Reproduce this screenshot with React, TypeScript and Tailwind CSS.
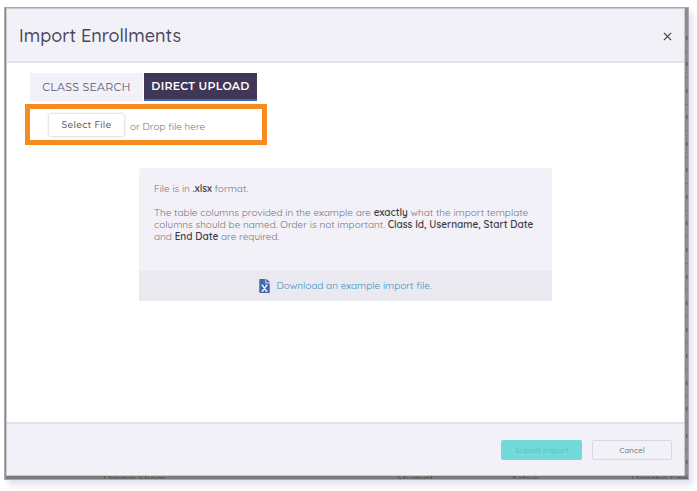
import { useState } from 'react'
import type { ReactNode } from 'react'

function FileExcelIcon() {
  return (
    <svg viewBox="0 0 384 512" className="h-[14px] w-[11px] shrink-0" aria-hidden="true">
      <path
        fill="#4268b0"
        d="M224 136V0H24C11 0 0 11 0 24v464c0 13 11 24 24 24h336c13 0 24-11 24-24V160H248c-13 0-24-11-24-24zM384 122v6H256V0h6c6 0 12 3 17 7l98 98c4 5 7 11 7 17z"
      />
      <path fill="none" stroke="#fff" strokeWidth="46" d="M112 232l160 210M272 232L112 442M84 236h70M230 236h70M84 440h70M230 440h70" />
    </svg>
  )
}

function CloseIcon() {
  return (
    <svg viewBox="0 0 10 10" className="size-[9px]" fill="none" stroke="#444" strokeWidth="1.4" aria-hidden="true">
      <path d="M1 1l8 8M9 1L1 9" />
    </svg>
  )
}

function Strong({ children }: { children: ReactNode }) {
  return <strong className="font-semibold text-[#3d3b44]">{children}</strong>
}

// The sliver of the dimmed page that shows below the dialog
function PageBehind() {
  return (
    <div className="flex h-[3px] overflow-hidden bg-[#7b7b7b] text-[10px] leading-[6px] text-[#45454c]" aria-hidden="true">
      <span className="w-1/7 shrink-0" />
      <span className="w-[44%]">Dimpin Shear</span>
      <span className="w-[17%]">Student</span>
      <span className="w-[18%]">Active</span>
      <span className="whitespace-nowrap">Doncho Cen</span>
    </div>
  )
}

// Edges of the table rows that show to the right of the dialog
function RowEdges() {
  return (
    <div className="flex w-[3px] flex-col overflow-hidden pt-[17px]" aria-hidden="true">
      {Array.from({ length: 17 }, (_, i) => (
        <div key={i} className="flex flex-1 items-center justify-end border-b border-[#7b7b7b]">
          <span className="h-1 w-[2px] rounded-l-xs border-l border-[#3c4468]" />
        </div>
      ))}
    </div>
  )
}

const tabs = [
  { id: 'search', label: 'CLASS SEARCH' },
  { id: 'upload', label: 'DIRECT UPLOAD' },
] as const

export default function App() {
  const [tab, setTab] = useState<'search' | 'upload'>('upload')

  return (
    <div className="flex min-h-screen flex-col bg-white pt-[7px] pr-2 pb-[11px] pl-1 font-['Quicksand','Lato',sans-serif] text-[#77757e]">
      <div className="flex flex-1 flex-col border border-[#a9a9a9] bg-[#8d8d8d] pl-px shadow-[4px_5px_6px_#e4e2f0]">
        <div className="flex flex-1">
          <section role="dialog" aria-labelledby="title" className="flex flex-1 flex-col border border-[#c9c9cc] bg-white">
            <header className="flex items-center justify-between border-b-2 border-[#e2e1ec] bg-[#f2f1f8] pt-[14px] pr-[11px] pb-3 pl-3">
              <h1 id="title" className="text-[18px] leading-[26px] font-medium text-[#4a4561]">Import Enrollments</h1>
              <button aria-label="Close" className="p-px">
                <CloseIcon />
              </button>
            </header>

            <main className="flex-1 pt-[10px]">
              <div role="tablist" className="ml-[23px] flex gap-px font-['Montserrat','Lato',sans-serif] text-[11px]">
                {tabs.map(t => (
                  <button
                    key={t.id}
                    role="tab"
                    aria-selected={tab === t.id}
                    onClick={() => setTab(t.id)}
                    className={`h-7 w-[113px] tracking-wide ${tab === t.id ? 'border-b-2 border-[#4268b0] bg-[#403657] font-semibold text-white' : 'bg-[#f2f1f8] text-[#5d5873]'}`}
                  >
                    {t.label}
                  </button>
                ))}
              </div>

              <div className="mt-[3px] ml-[18px] flex h-[41px] w-[242px] items-center gap-[6px] border-[5px] border-[#f68b1f] pl-[19px]">
                <button className="h-[22px] w-[75px] rounded-xs bg-white text-[10px] font-medium tracking-wide text-[#5c5c5c] shadow-[0_0_3px_#bbb]">
                  Select File
                </button>
                <span className="pt-1 text-[10px]">or Drop file here</span>
              </div>

              <div className="mx-auto mt-[23px] w-[61%] overflow-hidden rounded-xs bg-[#f2f1f8] text-[10px] leading-3">
                <div className="space-y-3 pt-[15px] pr-2 pb-7 pl-[15px]">
                  <p>
                    File is in <Strong>.xlsx</Strong> format.
                  </p>
                  <p>
                    The table columns provided in the example are <Strong>exactly</Strong> what the import template
                    columns should be named. Order is not important. <Strong>Class Id, Username, Start Date</Strong> and{' '}
                    <Strong>End Date</Strong> are required.
                  </p>
                </div>
                <div className="flex h-[30px] items-center justify-center bg-[#eae9f0]">
                  <a href="#example" className="flex items-center gap-[6px] text-[#3a90c2]">
                    <FileExcelIcon />
                    Download an example import file.
                  </a>
                </div>
              </div>
            </main>

            <footer className="flex justify-end gap-[10px] border-t-2 border-[#e2e1ec] bg-[#f2f1f8] pt-4 pr-3 pb-[15px] text-[8px] font-medium">
              <button disabled className="h-5 w-[81px] rounded-xs bg-[#72dada] text-[#58bfc3]">Submit Import</button>
              <button className="h-5 w-20 rounded-xs border border-[#d8d6e8]">Cancel</button>
            </footer>
          </section>
          <RowEdges />
        </div>
        <PageBehind />
      </div>
    </div>
  )
}
